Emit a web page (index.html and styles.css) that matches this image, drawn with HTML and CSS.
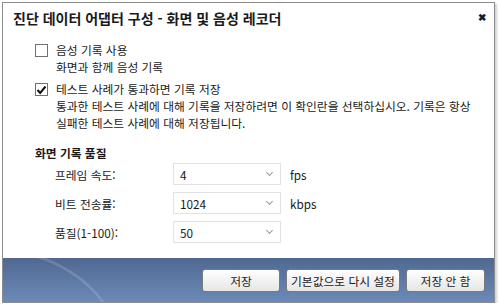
FILE: index.html
```html
<!DOCTYPE html>
<html lang="ko">
<head>
    <meta charset="UTF-8">
    <title>진단 데이터 어댑터 구성</title>
    <link rel="stylesheet" href="styles.css">
</head>
<body>
    <div class="dialog">
        <div class="content">
            <div class="title-row">
                <h1>진단 데이터 어댑터 구성 - 화면 및 음성 레코더</h1>
                <span class="close">&#x2716;</span>
            </div>

            <div class="option">
                <span class="check"></span>
                <div class="option-text">
                    <div>음성 기록 사용</div>
                    <div>화면과 함께 음성 기록</div>
                </div>
            </div>

            <div class="option second">
                <span class="check checked">
                    <svg width="11" height="10" viewBox="0 0 11 10"><path d="M1.5 5 L4.2 8 L9.5 1.5" fill="none" stroke="#111" stroke-width="2"/></svg>
                </span>
                <div class="option-text">
                    <div>테스트 사례가 통과하면 기록 저장</div>
                    <div>통과한 테스트 사례에 대해 기록을 저장하려면 이 확인란을 선택하십시오. 기록은 항상</div>
                    <div>실패한 테스트 사례에 대해 저장됩니다.</div>
                </div>
            </div>

            <h2>화면 기록 품질</h2>
            <div class="fields">
                <label>프레임 속도:</label>
                <div class="select"><span>4</span><i></i></div>
                <span class="unit">fps</span>

                <label>비트 전송률:</label>
                <div class="select"><span>1024</span><i></i></div>
                <span class="unit">kbps</span>

                <label>품질(1-100):</label>
                <div class="select"><span>50</span><i></i></div>
                <span class="unit"></span>
            </div>
        </div>
        <div class="footer">
            <div class="glare"></div>
            <button type="button" class="btn-save">저장</button>
            <button type="button" class="btn-reset">기본값으로 다시 설정</button>
            <button type="button" class="btn-cancel">저장 안 함</button>
        </div>
    </div>
</body>
</html>
```

FILE: styles.css
```css
body {
    margin: 0;
    background-color: #ffffff;
    font-family: "Noto Sans CJK KR", "Noto Sans", sans-serif;
    font-size: 11.75px;
    color: #1a1a1a;
}
.dialog {
    margin: 2px 0 0 2px;
    width: 491px;
    height: 299px;
    border: 1px solid #8c8c8c;
    box-shadow: 2px 2px 2px rgba(0, 0, 0, 0.18);
    display: flex;
    flex-direction: column;
    background-color: #fff;
}
.content {
    flex: 1;
}
.title-row {
    display: flex;
    justify-content: space-between;
    padding: 5px 8px 0 10px;
    height: 26px;
}
h1 {
    margin: 0;
    font-size: 14px;
    font-weight: bold;
    color: #1a1a1a;
}
.close {
    font-size: 10px;
    font-weight: bold;
    margin-top: 1px;
}
.option {
    display: flex;
    margin: 7px 0 0 32px;
    line-height: 17px;
}
.option.second {
    margin-top: 5px;
}
.check {
    width: 11px;
    height: 11px;
    border: 1px solid #707070;
    margin: 3px 8px 0 0;
    display: flex;
    align-items: center;
    justify-content: center;
}
.check svg {
    display: block;
}
h2 {
    margin: 13px 0 0 32px;
    font-size: 11.75px;
    font-weight: bold;
}
.fields {
    display: grid;
    grid-template-columns: 118px 108px auto;
    row-gap: 7px;
    align-items: center;
    margin: 2px 0 0 52px;
}
.select {
    height: 20px;
    border: 1px solid #e2e2e2;
    display: flex;
    align-items: center;
    justify-content: space-between;
    padding: 0 8px 0 6px;
}
.select i {
    width: 4px;
    height: 4px;
    border-right: 1.5px solid #9a9a9a;
    border-bottom: 1.5px solid #9a9a9a;
    transform: rotate(45deg);
    margin-top: -3px;
}
.unit {
    padding-left: 9px;
}
.footer {
    position: relative;
    overflow: hidden;
    height: 44px;
    display: flex;
    justify-content: flex-end;
    align-items: center;
    gap: 6px;
    padding: 0 9px 0 0;
    background: linear-gradient(#4f6891, #6c8ab8);
}
.glare {
    position: absolute;
    left: -60px;
    top: 0;
    width: 180px;
    height: 120px;
    border-radius: 50%;
    border-top: 3px solid rgba(255, 255, 255, 0.15);
    transform: rotate(28deg);
}
button {
    position: relative;
    height: 23px;
    border: 1px solid #7a7a7a;
    border-radius: 3px;
    background: linear-gradient(#ffffff, #f2f2f2 50%, #e6e6e6);
    font-family: inherit;
    font-size: 11.75px;
    color: #1a1a1a;
    padding: 0;
}
.btn-save {
    width: 78px;
}
.btn-reset {
    width: 114px;
}
.btn-cancel {
    width: 79px;
}
```
